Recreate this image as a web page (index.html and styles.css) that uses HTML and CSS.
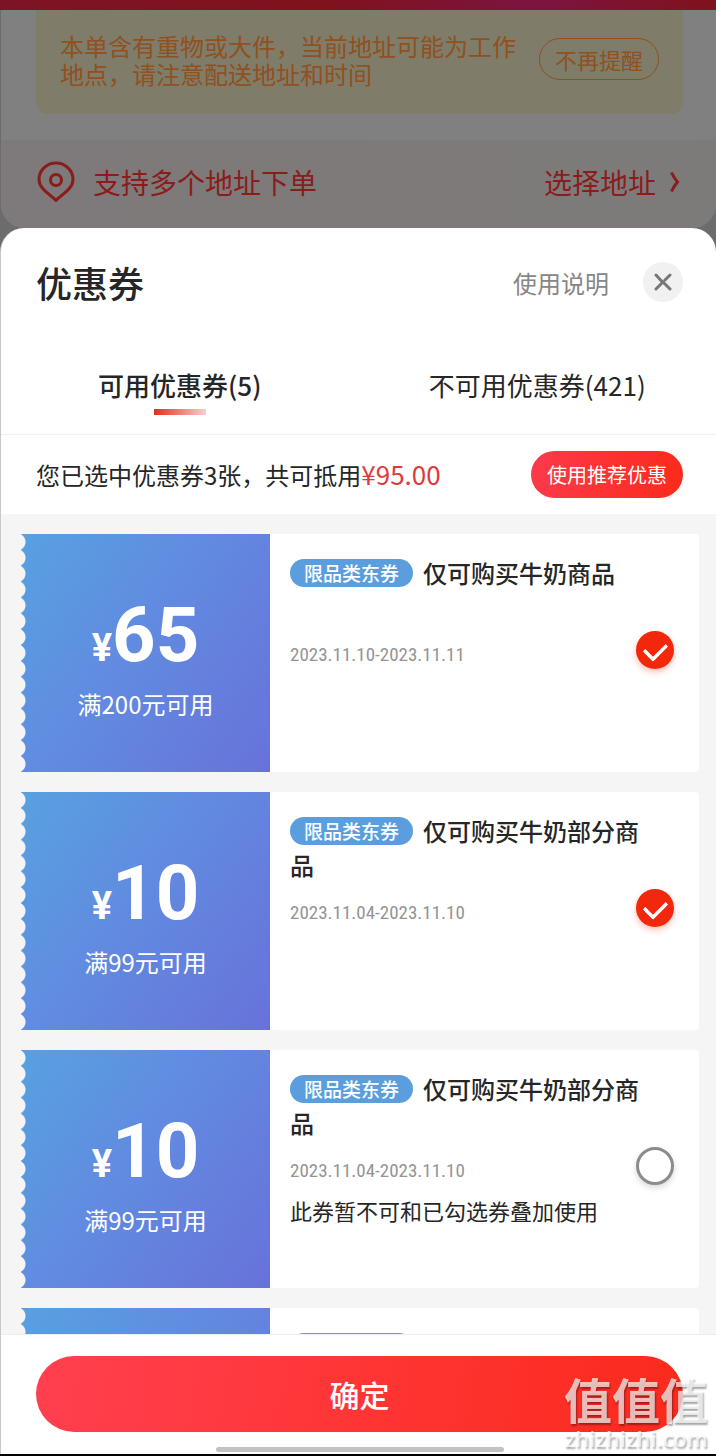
FILE: index.html
```html
<!DOCTYPE html>
<html lang="zh-CN">

<head>
    <meta charset="UTF-8">
    <meta name="viewport" content="width=device-width, initial-scale=1.0">
    <title>优惠券</title>
    <link rel="stylesheet" href="styles.css">
</head>

<body>
    <div class="status"></div>
    <div class="order">
        <div class="notice">
            <p>本单含有重物或大件，当前地址可能为工作地点，请注意配送地址和时间</p>
            <button type="button" class="remind">不再提醒</button>
        </div>
        <div class="address">
            <svg class="pin" viewBox="0 0 38 42" fill="none" stroke="#8b1c1c" stroke-width="3">
                <path d="M19 39.500C16 35 2 29 2 18.500A17 16.500 0 0 1 36 18.500C36 29 22 35 19 39.500Z" stroke-linejoin="round" />
                <circle cx="19" cy="19" r="5.500" />
            </svg>
            <span>支持多个地址下单</span>
            <a href="#" class="choose">选择地址
                <svg class="arrow" viewBox="0 0 10 22" fill="none" stroke="#8b1c1c" stroke-width="3">
                    <path d="M1.500 1.500Q4 7 7.500 11Q4 15 1.500 20.500" />
                </svg>
            </a>
        </div>
    </div>

    <div class="sheet">
        <div class="head">
            <h1>优惠券</h1>
            <a href="#" class="help">使用说明</a>
            <button type="button" class="close" aria-label="关闭">
                <svg viewBox="0 0 18 18" fill="none" stroke="#777" stroke-width="3" stroke-linecap="round">
                    <path d="M2 2L7 7.500Q9 9 11 11L16 16M2 16L8 10M11 7L16 2" />
                </svg>
            </button>
        </div>

        <div class="tabs">
            <button type="button" class="tab active">可用优惠券(5)</button>
            <button type="button" class="tab">不可用优惠券(421)</button>
        </div>

        <div class="summary">
            <p>您已选中优惠券3张，共可抵用<span class="money">¥95.00</span></p>
            <button type="button" class="recommend">使用推荐优惠</button>
        </div>

        <div class="list">
            <div class="coupon">
                <div class="price">
                    <p class="num"><small>¥</small>65</p>
                    <p class="limit">满200元可用</p>
                </div>
                <div class="info">
                    <label for="c1" class="name"><span class="tag">限品类东券</span>仅可购买牛奶商品</label>
                    <p class="date">2023.11.10-2023.11.11</p>
                    <input type="checkbox" id="c1" checked>
                </div>
            </div>

            <div class="coupon">
                <div class="price">
                    <p class="num"><small>¥</small>10</p>
                    <p class="limit">满99元可用</p>
                </div>
                <div class="info">
                    <label for="c2" class="name"><span class="tag">限品类东券</span>仅可购买牛奶部分商品</label>
                    <p class="date">2023.11.04-2023.11.10</p>
                    <input type="checkbox" id="c2" checked>
                </div>
            </div>

            <div class="coupon">
                <div class="price">
                    <p class="num"><small>¥</small>10</p>
                    <p class="limit">满99元可用</p>
                </div>
                <div class="info">
                    <label for="c3" class="name"><span class="tag">限品类东券</span>仅可购买牛奶部分商品</label>
                    <p class="date">2023.11.04-2023.11.10</p>
                    <input type="checkbox" id="c3">
                    <p class="note">此券暂不可和已勾选券叠加使用</p>
                </div>
            </div>

            <div class="coupon">
                <div class="price"></div>
                <div class="info">
                    <p class="name"><span class="tag"></span></p>
                </div>
            </div>
        </div>

        <div class="foot">
            <button type="button" class="ok">确定</button>
            <div class="bar"></div>
        </div>
    </div>

    <div class="mark">
        <b>值值值</b>
        <span>zhizhizhi.com</span>
    </div>
</body>

</html>
```

FILE: styles.css
```css
* {
    box-sizing: border-box;
}

body {
    margin: 0;
    height: 100vh;
    display: flex;
    flex-direction: column;
    overflow: hidden;
    background: #6c6c6c;
    border-bottom: 2px solid #000;
    font-family: "Noto Sans CJK SC", sans-serif;
    color: #262626;
}

p,
h1 {
    margin: 0;
}

a {
    text-decoration: none;
}

button {
    padding: 0;
    border: 0;
    background: none;
    font-family: inherit;
    color: inherit;
}

.status {
    flex: none;
    height: 10px;
    background: linear-gradient(90deg, #7d1425, #80121c 45%, #7c1440 75%, #80121c);
}

/* page behind the sheet */
.order {
    flex: none;
    height: 218px;
    background: #808080;
    border-left: 1px solid #6c6c6c;
    border-radius: 0 0 24px 24px;
    overflow: hidden;
}

.notice {
    display: flex;
    align-items: flex-start;
    justify-content: space-between;
    height: 104px;
    margin: 0 33px 26px 35px;
    padding: 22px 24px 0;
    background: #7f7c6a;
    border-radius: 0 0 12px 12px;
    color: #90501f;
}

.notice p {
    width: 460px;
    font-size: 24px;
    line-height: 28px;
}

.remind {
    width: 120px;
    height: 42px;
    margin-top: 6px;
    border: 1px solid #90501f;
    border-radius: 21px;
    font-size: 22px;
    line-height: 40px;
}

.address {
    display: flex;
    align-items: center;
    height: 88px;
    padding: 0 36px 4px;
    background: linear-gradient(90deg, #7e797a, #7d7b79);
    font-size: 28px;
    color: #8b1c1c;
}

.pin {
    width: 38px;
    height: 42px;
    margin-right: 18px;
}

.choose {
    display: flex;
    align-items: center;
    margin-left: auto;
    color: inherit;
}

.arrow {
    width: 10px;
    height: 22px;
    margin-left: 14px;
}

.sheet {
    flex: 1;
    min-height: 0;
    display: flex;
    flex-direction: column;
    background: #fff;
    border-left: 1px solid #c8c8c8;
    border-radius: 24px 24px 0 0;
}

.head {
    display: flex;
    align-items: center;
    height: 108px;
    padding: 0 33px 0 35px;
}

h1 {
    flex: 1;
    font-size: 36px;
    font-weight: 500;
}

.help {
    font-size: 24px;
    color: #868686;
}

.close {
    display: flex;
    align-items: center;
    justify-content: center;
    width: 40px;
    height: 40px;
    margin-left: 34px;
    background: #f1f1f1;
    border-radius: 50%;
}

.close svg {
    width: 18px;
    height: 18px;
}

.tabs {
    display: grid;
    grid-template-columns: 1fr 1fr;
    height: 99px;
    border-bottom: 1px solid #f0f0f0;
}

.tab {
    display: flex;
    flex-direction: column;
    align-items: center;
    padding-top: 29px;
    font-size: 26px;
    line-height: 40px;
}

.active {
    font-weight: 500;
}

.active::after {
    content: '';
    width: 52px;
    height: 6px;
    margin-top: 4px;
    background: linear-gradient(90deg, #e0301e, #f9d0ce);
}

.summary {
    display: flex;
    align-items: center;
    justify-content: space-between;
    height: 79px;
    padding: 0 33px 0 35px;
    font-size: 24px;
    line-height: 36px;
}

.money {
    font-size: 26px;
    color: #e0393e;
}

.recommend {
    width: 152px;
    height: 47px;
    background: linear-gradient(90deg, #fb3a4a, #fb2b1c);
    border-radius: 24px;
    font-size: 20px;
    color: #fff;
}

.list {
    flex: 1;
    min-height: 0;
    padding: 20px 17px 0 20px;
    background: #f5f5f5;
    overflow: hidden;
}

.coupon {
    display: flex;
    height: 238px;
    margin-bottom: 20px;
}

/* scalloped left edge over the blue gradient */
.price {
    width: 249px;
    padding-top: 61px;
    background-image: radial-gradient(circle at -4px 50%, #f5f5f5 8px, transparent 9px),
        linear-gradient(125deg, #57a1e1, #618be0 45%, #6872d9);
    background-size: 5px 16px, auto;
    background-repeat: no-repeat round, no-repeat;
    text-align: center;
    color: #fff;
}

.num {
    font-family: Roboto, "Noto Sans CJK SC", sans-serif;
    font-size: 76px;
    font-weight: 700;
    line-height: 80px;
}

.num small {
    font-size: 38px;
}

.limit {
    font-size: 24px;
    line-height: 32px;
}

.info {
    flex: 1;
    display: grid;
    grid-template-columns: 1fr 38px;
    grid-template-rows: 69px 50px 38px;
    align-items: center;
    align-content: start;
    padding: 22px 25px 0 20px;
    background: #fff;
    border-radius: 0 4px 4px 0;
}

.name {
    grid-column: 1 / 3;
    align-self: start;
    padding-right: 24px;
    font-size: 24px;
    font-weight: 500;
    line-height: 34px;
}

.tag {
    display: inline-block;
    width: 123px;
    height: 28px;
    margin-top: 3px;
    margin-right: 10px;
    background: #5b9ede;
    border-radius: 14px;
    font-size: 19px;
    line-height: 28px;
    text-align: center;
    vertical-align: top;
    color: #fff;
}

.date {
    padding-top: 8px;
    font-family: "Roboto Condensed", "Liberation Sans Narrow", Roboto, sans-serif;
    font-size: 19px;
    color: #949494;
}

.note {
    grid-column: 1 / 3;
    font-size: 22px;
}

input[type="checkbox"] {
    appearance: none;
    display: flex;
    justify-content: center;
    width: 38px;
    height: 38px;
    margin: 0;
    background: #fff;
    border: 3px solid #8c8c8c;
    border-radius: 50%;
    box-shadow: 0 3px 6px rgba(0, 0, 0, 0.15);
}

input[type="checkbox"]:checked {
    background: #f2270c;
    border: 0;
    box-shadow: 0 3px 6px rgba(242, 39, 12, 0.3);
}

input[type="checkbox"]:checked::before {
    content: '';
    width: 11px;
    height: 18px;
    margin-top: 7px;
    border: solid #fff;
    border-width: 0 4px 4px 0;
    border-radius: 2px;
    transform: rotate(45deg);
}

.foot {
    height: 120px;
    padding: 21px 33px 0 35px;
    border-top: 1px solid #eee;
}

.ok {
    display: block;
    width: 100%;
    height: 76px;
    background: linear-gradient(100deg, #ff4050, #ff3535 50%, #fa2a1c);
    border-radius: 38px;
    font-size: 30px;
    font-weight: 500;
    color: #fff;
}

.bar {
    width: 288px;
    height: 5px;
    margin: 15px auto 0;
    background: #c2c2c2;
    border-radius: 3px;
}

.mark {
    position: fixed;
    right: 8px;
    bottom: 5px;
    display: flex;
    flex-direction: column;
    align-items: flex-end;
    color: rgba(255, 255, 255, 0.7);
    text-shadow: 1px 2px 2px rgba(0, 0, 0, 0.35);
}

.mark b {
    font-size: 48px;
    line-height: 54px;
}

.mark span {
    font-family: "Open Sans", sans-serif;
    font-size: 22px;
    font-weight: 600;
    line-height: 26px;
}
```
